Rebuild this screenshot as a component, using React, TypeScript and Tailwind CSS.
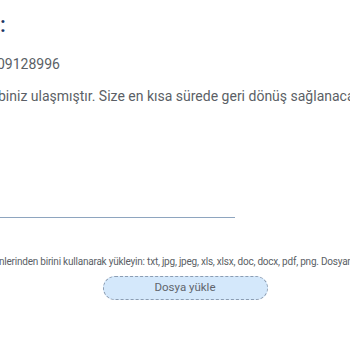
export default function App() {
  return (
    <div className="relative h-[350px] w-[350px] overflow-hidden bg-white font-['Roboto',sans-serif]">
      <div className="flex flex-col">
        <div className="mt-[10px] h-[30px] text-[22px] font-medium leading-[30px] text-[#1a3566]">:</div>
        <div className="mt-[16px] -ml-[3px] whitespace-nowrap text-[14px] leading-[16px] text-[#5b5f66]">09128996</div>
        <div className="mt-[16px] -ml-[2px] whitespace-nowrap text-[14px] leading-[16px] text-[#5b5f66]">
          biniz ulaşmıştır. Size en kısa sürede geri dönüş sağlanacaktır.
        </div>
        <div className="mt-[113px] h-[1px] w-[235px] bg-[#8ea5bf]" />
        <div className="mt-[38px] -ml-[1px] whitespace-nowrap text-[10px] leading-[12px] tracking-[-0.22px] text-[#5b5f66]">
          nlerinden birini kullanarak yükleyin: txt, jpg, jpeg, xls, xlsx, doc, docx, pdf, png. Dosyanın boyutu
        </div>
        <div className="mt-[8px] flex justify-center pl-[20px]">
          <button
            type="button"
            className="flex h-[24px] w-[165px] items-center justify-center rounded-[12px] border border-dashed border-[#8c9db2] bg-[#d4e8fb] text-[11.5px] text-[#61656c]"
          >
            Dosya yükle
          </button>
        </div>
      </div>
    </div>
  );
}
